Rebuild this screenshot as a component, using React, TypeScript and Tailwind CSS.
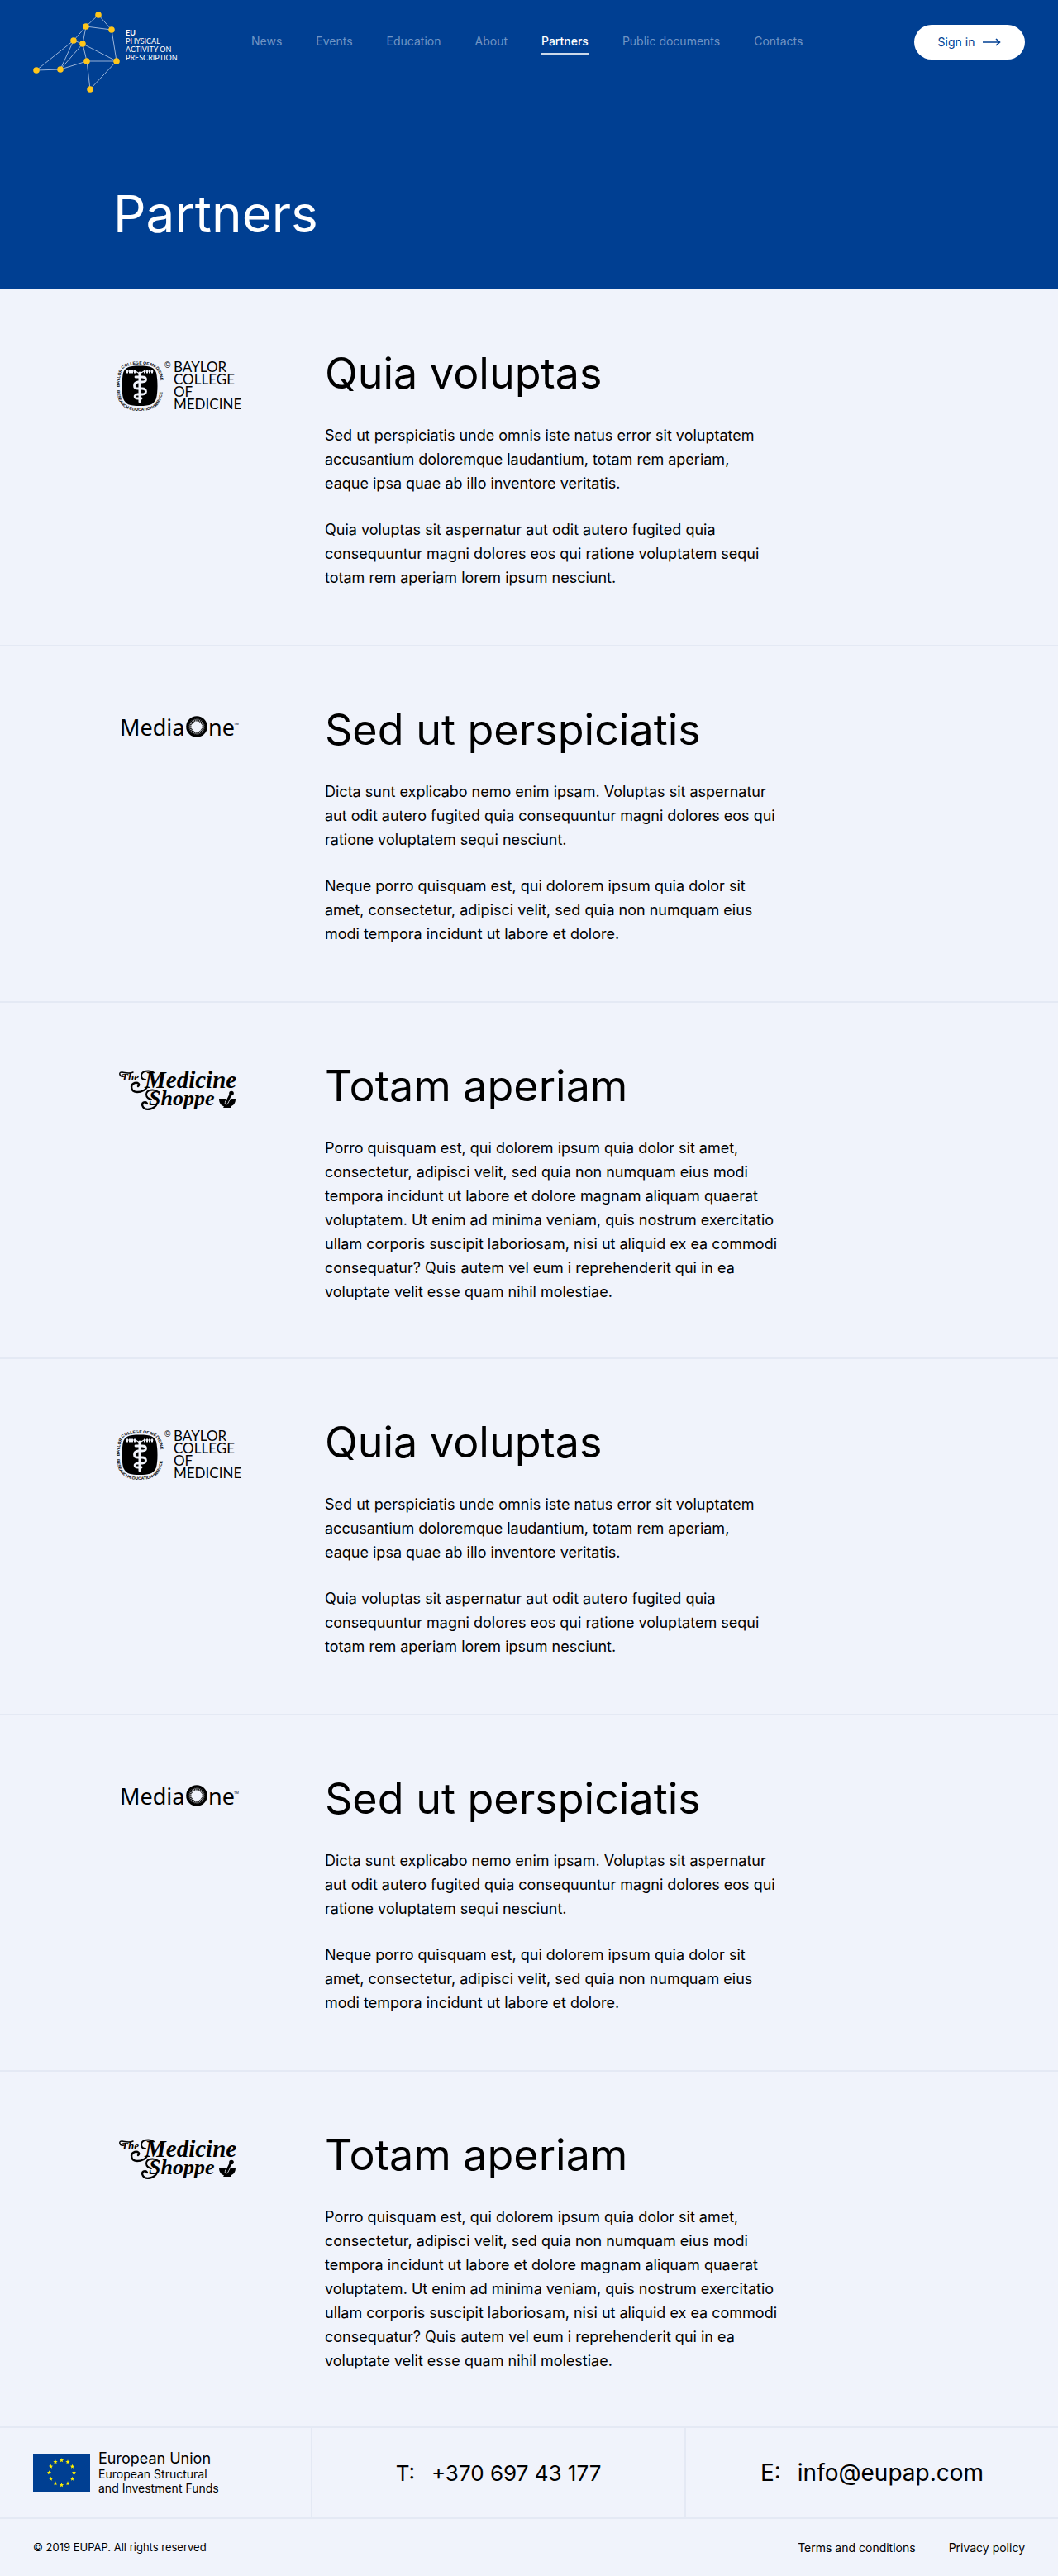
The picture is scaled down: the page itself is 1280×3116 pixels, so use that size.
import type { ReactNode } from "react";

const nodes: [number, number][] = [
  [79, 4], [64, 18], [95, 22], [49, 35], [60, 39], [4, 71], [33, 70], [65, 60], [101, 60], [69, 94],
];
const edges: [number, number][] = [
  [0, 1], [0, 2], [1, 2], [1, 3], [1, 4], [3, 4], [3, 5], [3, 6], [4, 6], [4, 7], [4, 8], [2, 8], [5, 6], [6, 7], [7, 8], [7, 9], [8, 9],
];

function BrandLogo() {
  return (
    <a href="#home" className="flex w-[174px] items-start gap-1.5 text-white" aria-label="EU Physical Activity on Prescription">
      <svg viewBox="0 0 106 98" className="h-[98px] w-[106px] shrink-0" aria-hidden="true">
        {edges.map(([a, b]) => (
          <line key={`${a}-${b}`} x1={nodes[a][0]} y1={nodes[a][1]} x2={nodes[b][0]} y2={nodes[b][1]} stroke="#a9c0e0" strokeWidth="0.9" />
        ))}
        {nodes.map(([x, y]) => (
          <circle key={`${x}-${y}`} cx={x} cy={y} r="3.8" fill="#ffc61a" />
        ))}
      </svg>
      <span className="pt-[21px] font-[Lato,sans-serif] text-[9px] leading-[10px]">
        <b>EU</b>
        <br />
        PHYSICAL
        <br />
        ACTIVITY ON
        <br />
        PRESCRIPTION
      </span>
    </a>
  );
}

function BaylorLogo() {
  return (
    <svg viewBox="0 -10 160 80" className="h-20 w-40" role="img" aria-label="Baylor College of Medicine">
      <defs>
        <path id="ring-top" d="M7 39 C6 30 7 21 11 15 C17 8 45 8 51 15 C56 21 58 32 55 44" />
        <path id="ring-bottom" d="M3 39 C4 55 9 66 31 66 C53 66 59 55 59 36" />
      </defs>
      <path d="M31 11.500 C45 11.500 49 14 51 20 C53 29 53 43 51 51 C48 58 44 60 31 60 C18 60 14 58 11 51 C9 43 9 29 11 20 C13 14 17 11.500 31 11.500Z" fill="#000" />
      <g fontFamily="Liberation Sans, sans-serif" fontWeight="700" fontSize="5">
        <text><textPath href="#ring-top" startOffset="2">BAYLOR COLLEGE OF MEDICINE</textPath></text>
        <text><textPath href="#ring-bottom" startOffset="2">RESEARCH•EDUCATION•SERVICE</textPath></text>
      </g>
      <g fill="none" stroke="#f0f3fb" strokeLinecap="round">
        <path d="M31 20V55" strokeWidth="3" />
        <path d="M26 25H34C40 25 40 31 34 31H29C23 32 23 39 29 39H34C40 39 40 46 34 46H28C24 47 24 51 29 51H33" strokeWidth="2.800" />
        <path d="M15 18H26L31 21L36 18H47" strokeWidth="1.200" />
        <path d="M15 18.500H26M36 18.500H47" strokeWidth="4" strokeDasharray="2 1" strokeLinecap="butt" />
      </g>
      <text x="61" y="14" fontFamily="Liberation Sans, sans-serif" fontSize="10">©</text>
      <g fontFamily="Lato, sans-serif" fontSize="17">
        <text x="72" y="19">BAYLOR</text>
        <text x="72" y="34">COLLEGE</text>
        <text x="72" y="49">OF</text>
        <text x="72" y="64">MEDICINE</text>
      </g>
    </svg>
  );
}

const rays = Array.from({ length: 28 }, (_, i) => (i * 2 * Math.PI) / 28);

function MediaOneLogo() {
  return (
    <svg viewBox="0 -10 160 80" className="h-20 w-40" role="img" aria-label="MediaOne">
      <g fontFamily="Noto Sans, sans-serif" fontSize="27">
        <text x="7" y="28">Media</text>
        <text x="114" y="28">ne</text>
      </g>
      <circle cx="100" cy="17" r="12.800" fill="#000" />
      <circle cx="100" cy="17" r="6.500" fill="#f0f3fb" />
      {rays.map((a) => (
        <line key={a} x1={100 + 6 * Math.cos(a)} y1={17 + 6 * Math.sin(a)} x2={100 + 9.5 * Math.cos(a)} y2={17 + 9.5 * Math.sin(a)} stroke="#f0f3fb" strokeWidth="0.700" />
      ))}
      <text x="145" y="15" fontFamily="Liberation Sans, sans-serif" fontSize="4">TM</text>
    </svg>
  );
}

function MedicineShoppeLogo() {
  return (
    <svg viewBox="0 -10 160 80" className="h-20 w-40" role="img" aria-label="The Medicine Shoppe">
      <g fontFamily="Liberation Serif, serif" fontWeight="700" fontStyle="italic">
        <text x="9" y="14" fontSize="13">The</text>
        <text x="37" y="23" fontSize="29">Medicine</text>
        <text x="42" y="44" fontSize="26">Shoppe</text>
      </g>
      <g fill="none" stroke="#000" strokeLinecap="round">
        <path d="M12 9C6 10 5 3 10 4C15 5 19 6 23 4" strokeWidth="1.500" />
        <path d="M48 4.500C43 1 33 2 33 8C33 11 35 13 38 13" strokeWidth="2" />
        <path d="M40 22C37 27 33 28 28 28C20 28 19 19 25 17C29 16 32 19 29 21" strokeWidth="2.400" />
        <path d="M54 28C48 24 39 25 39 31C39 35 42 36 45 37" strokeWidth="2" />
        <path d="M52 42C49 49 38 51 35 46C32 41 38 38 40 42" strokeWidth="2.400" />
      </g>
      <path d="M127 36H147C147 41 145 44 141 45.500L142 47H132L133 45.500C129 44 127 41 127 36Z" fill="#000" />
      <path d="M141 31L136 41" stroke="#f0f3fb" strokeWidth="4.500" strokeLinecap="round" />
      <path d="M141 31L136 41" stroke="#000" strokeWidth="3" strokeLinecap="round" />
      <circle cx="142" cy="29.500" r="2.800" />
    </svg>
  );
}

function EuFlag() {
  const star = "M0-2.700L.7-.9 2.600-.8 1.100.4 1.600 2.200 0 1.200-1.600 2.200-1.100.4-2.600-.8-.7-.9Z";
  return (
    <svg viewBox="0 0 69 46" className="h-[46px] w-[69px] shrink-0" role="img" aria-label="Flag of the European Union">
      <rect width="69" height="46" fill="#003f92" />
      {Array.from({ length: 12 }, (_, i) => {
        const a = (i * Math.PI) / 6;
        return <path key={i} d={star} fill="#fff000" transform={`translate(${34.5 + 15 * Math.sin(a)} ${23 - 15 * Math.cos(a)})`} />;
      })}
    </svg>
  );
}

type Partner = { title: string; logo: ReactNode; paragraphs: string[] };

const partners: Partner[] = [
  {
    title: "Quia voluptas",
    logo: <BaylorLogo />,
    paragraphs: [
      "Sed ut perspiciatis unde omnis iste natus error sit voluptatem\naccusantium doloremque laudantium, totam rem aperiam,\neaque ipsa quae ab illo inventore veritatis.",
      "Quia voluptas sit aspernatur aut odit autero fugited quia\nconsequuntur magni dolores eos qui ratione voluptatem sequi\ntotam rem aperiam lorem ipsum nesciunt.",
    ],
  },
  {
    title: "Sed ut perspiciatis",
    logo: <MediaOneLogo />,
    paragraphs: [
      "Dicta sunt explicabo nemo enim ipsam. Voluptas sit aspernatur\naut odit autero fugited quia consequuntur magni dolores eos qui\nratione voluptatem sequi nesciunt.",
      "Neque porro quisquam est, qui dolorem ipsum quia dolor sit\namet, consectetur, adipisci velit, sed quia non numquam eius\nmodi tempora incidunt ut labore et dolore.",
    ],
  },
  {
    title: "Totam aperiam",
    logo: <MedicineShoppeLogo />,
    paragraphs: [
      "Porro quisquam est, qui dolorem ipsum quia dolor sit amet,\nconsectetur, adipisci velit, sed quia non numquam eius modi\ntempora incidunt ut labore et dolore magnam aliquam quaerat\nvoluptatem. Ut enim ad minima veniam, quis nostrum exercitatio\nullam corporis suscipit laboriosam, nisi ut aliquid ex ea commodi\nconsequatur? Quis autem vel eum i reprehenderit qui in ea\nvoluptate velit esse quam nihil molestiae.",
    ],
  },
];

const links = ["News", "Events", "Education", "About", "Partners", "Public documents", "Contacts"];

export default function App() {
  return (
    <div className="bg-[#f0f3fb] font-[Inter,sans-serif] text-black">
      <header className="bg-[#003f92] pb-14 text-white">
        <div className="flex items-start px-10 pt-3.5">
          <BrandLogo />
          <nav className="ml-[90px] flex gap-[41px] pt-[26px]">
            {links.map((l) => (
              <a
                key={l}
                href="#"
                aria-current={l === "Partners" ? "page" : undefined}
                className={
                  l === "Partners"
                    ? "border-b-2 border-[#ccd9e9] pb-1 text-sm font-medium whitespace-nowrap"
                    : "pb-1 text-sm whitespace-nowrap text-[#7094c4]"
                }
              >
                {l}
              </a>
            ))}
          </nav>
          <button type="button" className="mt-4 ml-auto flex h-[42px] w-[134px] items-center justify-center gap-2.5 rounded-full bg-white text-sm text-[#003f92]">
            Sign in
            <svg viewBox="0 0 22 12" className="h-3 w-[22px]" fill="none" stroke="currentColor" strokeWidth="1.600" aria-hidden="true">
              <path d="M0 6H20M16 2L20.500 6L16 10" />
            </svg>
          </button>
        </div>
        <h1 className="mt-28 pl-[137px] text-[62px] leading-[70px]">Partners</h1>
      </header>

      <main className="pt-px">
        {[...partners, ...partners].map((p, i) => (
          <section key={i} className="flex min-h-[431px] border-b-2 border-[#e4e9f4] pt-[70px] pr-10 pb-[65px] pl-[138px]">
            <div className="w-[255px] shrink-0">{p.logo}</div>
            <div>
              <h2 className="text-[52px] leading-[62px]">{p.title}</h2>
              <div className="mt-[29px] flex flex-col gap-[27px] text-lg leading-[29px]">
                {p.paragraphs.map((t) => (
                  <p key={t} className="whitespace-pre-line">{t}</p>
                ))}
              </div>
            </div>
          </section>
        ))}
      </main>

      <footer>
        <div className="grid grid-cols-[378fr_452fr_450fr] border-b-2 border-[#e4e9f4]">
          <div className="flex h-[108px] items-center gap-2.5 border-r-2 border-[#e4e9f4] pl-10">
            <EuFlag />
            <p className="text-sm leading-[17px]">
              <span className="block text-lg leading-5">European Union</span>
              European Structural
              <br />
              and Investment Funds
            </p>
          </div>
          <div className="flex items-center justify-center gap-5 border-r-2 border-[#e4e9f4] text-[26px]">
            <span>T:</span>
            <a href="tel:+37069743177">+370 697 43 177</a>
          </div>
          <div className="flex items-center justify-center gap-5 text-[28px]">
            <span>E:</span>
            <a href="mailto:info@eupap.com">info@eupap.com</a>
          </div>
        </div>
        <div className="flex h-[69px] items-center gap-10 px-10 text-sm">
          <p className="mr-auto text-[13px]">© 2019 EUPAP. All rights reserved</p>
          <a href="#terms">Terms and conditions</a>
          <a href="#privacy">Privacy policy</a>
        </div>
      </footer>
    </div>
  );
}
